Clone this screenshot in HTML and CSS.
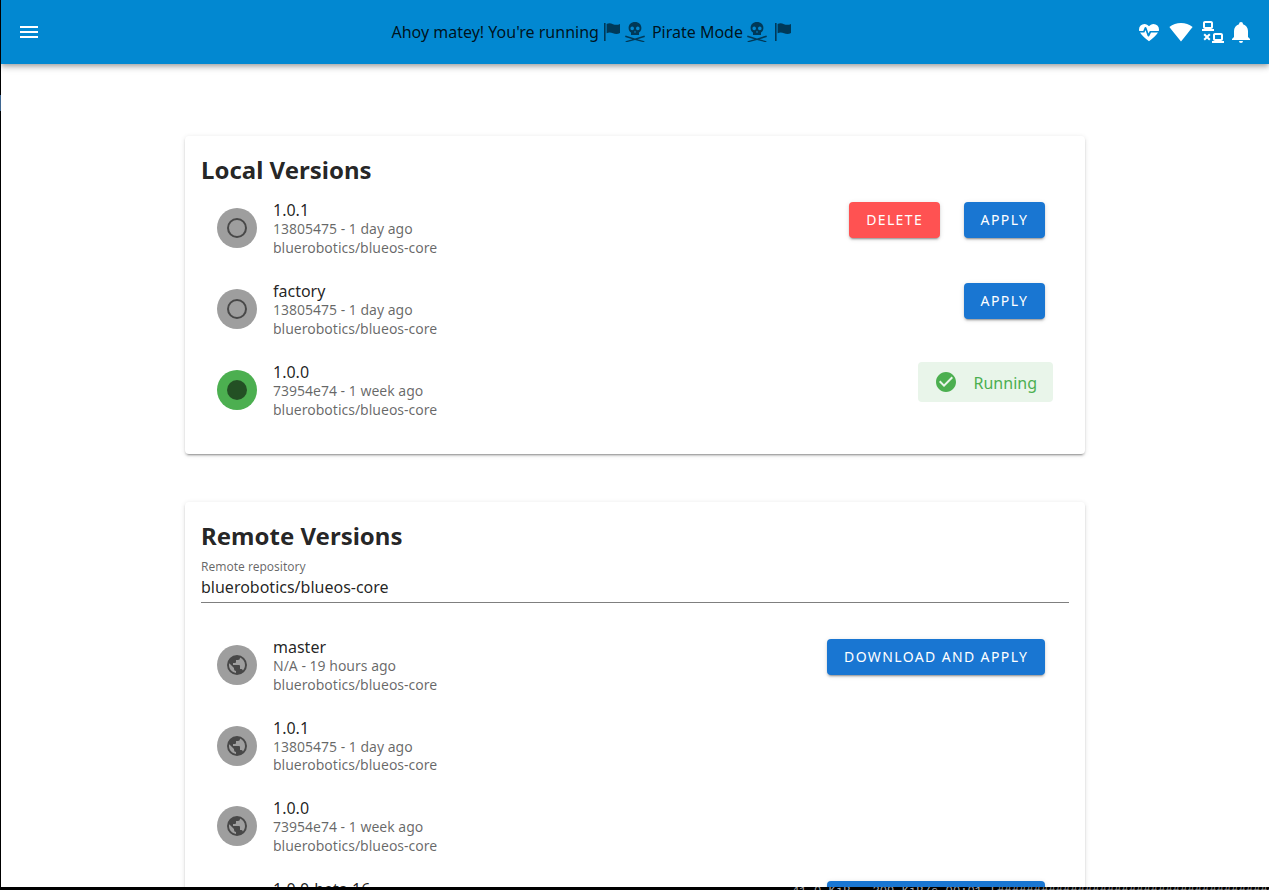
FILE: index.html
```html
<!DOCTYPE html>
<html lang="en">
<head>
  <meta charset="UTF-8" />
  <title>Version Chooser</title>
  <link rel="stylesheet" href="styles.css">
</head>
<body>

  <!-- icon set -->
  <svg class="icon-defs" xmlns="http://www.w3.org/2000/svg">
    <symbol id="i-menu" viewBox="0 0 24 24"><path d="M3,6H21V8H3V6M3,11H21V13H3V11M3,16H21V18H3V16Z"/></symbol>
    <symbol id="i-heart" viewBox="0 0 24 24"><path d="M7.5,4A5.5,5.5 0 0,0 2,9.5C2,10 2.09,10.5 2.22,11H6.27L7.53,7.63C7.83,6.82 9.08,6.74 9.47,7.63L11.5,13.5L12.5,11.5C12.7,11.1 13,11 13.4,11H21.78C21.91,10.5 22,10 22,9.5A5.5,5.5 0 0,0 16.5,4C14.64,4 13,4.93 12,6.34C11,4.93 9.36,4 7.5,4M3,12.5C4.5,15 8,18.5 12,21.35C16,18.5 19.5,15 21,12.5H14L12.3,15.9C11.9,16.7 10.8,16.6 10.5,15.8L8.5,10.1L7.4,12.5H3Z"/></symbol>
    <symbol id="i-wifi" viewBox="0 0 24 24"><path d="M12,3C7.79,3 3.7,4.41 0.38,7C4.41,12.06 7.89,16.37 12,21.5C16.08,16.42 20.24,11.24 23.65,7C20.32,4.41 16.22,3 12,3Z"/></symbol>
    <symbol id="i-lan" viewBox="0 0 24 24"><path d="M4,1C2.89,1 2,1.89 2,3V7C2,8.11 2.89,9 4,9H1V11H13V9H10C11.11,9 12,8.11 12,7V3C12,1.89 11.11,1 10,1H4M4,3H10V7H4V3M14,13C12.89,13 12,13.89 12,15V19C12,20.11 12.89,21 14,21H11V23H23V21H20C21.11,21 22,20.11 22,19V15C22,13.89 21.11,13 20,13H14M3.88,13.46L2.46,14.88L4.59,17L2.46,19.12L3.88,20.54L6,18.41L8.12,20.54L9.54,19.12L7.41,17L9.54,14.88L8.12,13.46L6,15.59L3.88,13.46M14,15H20V19H14V15Z"/></symbol>
    <symbol id="i-bell" viewBox="0 0 24 24"><path d="M21,19V20H3V19L5,17V11C5,7.9 7.03,5.17 10,4.29C10,4.19 10,4.1 10,4A2,2 0 0,1 12,2A2,2 0 0,1 14,4C14,4.1 14,4.19 14,4.29C16.97,5.17 19,7.9 19,11V17L21,19M14,21A2,2 0 0,1 12,23A2,2 0 0,1 10,21"/></symbol>
    <symbol id="i-radio" viewBox="0 0 24 24"><path d="M12,20A8,8 0 0,1 4,12A8,8 0 0,1 12,4A8,8 0 0,1 20,12A8,8 0 0,1 12,20M12,2A10,10 0 0,0 2,12A10,10 0 0,0 12,22A10,10 0 0,0 22,12A10,10 0 0,0 12,2Z"/></symbol>
    <symbol id="i-dot" viewBox="0 0 24 24"><circle cx="12" cy="12" r="10"/></symbol>
    <symbol id="i-earth" viewBox="0 0 24 24"><path d="M17.9,17.39C17.64,16.59 16.89,16 16,16H15V13A1,1 0 0,0 14,12H8V10H10A1,1 0 0,0 11,9V7H13A2,2 0 0,0 15,5V4.59C17.93,5.77 20,8.64 20,12C20,14.08 19.2,15.97 17.9,17.39M11,19.93C7.05,19.44 4,16.08 4,12C4,11.38 4.08,10.78 4.21,10.21L9,15V16A2,2 0 0,0 11,18M12,2A10,10 0 0,0 2,12A10,10 0 0,0 12,22A10,10 0 0,0 22,12A10,10 0 0,0 12,2Z"/></symbol>
    <symbol id="i-check" viewBox="0 0 24 24"><path d="M12 2C6.5 2 2 6.5 2 12S6.5 22 12 22 22 17.5 22 12 17.5 2 12 2M10 17L5 12L6.41 10.59L10 14.17L17.59 6.58L19 8L10 17Z"/></symbol>
    <symbol id="i-flag" viewBox="0 0 16 18"><path d="M0,0H1.6V18H0ZM2.6,1C5,-0.2 7,0.4 9,1.2C11,2 13.5,2.2 16,1V10C13.5,11.4 11,11 9,10.2C7,9.4 5,9 2.6,10.2Z"/></symbol>
    <symbol id="i-skull" viewBox="0 0 20 20"><path fill-rule="evenodd" d="M10,0C6,0 3.6,2.6 3.6,6C3.6,8 4.5,9.6 6,10.6V13H14V10.6C15.5,9.6 16.4,8 16.4,6C16.4,2.6 14,0 10,0ZM7.2,4.6A1.8,1.8 0 1,1 7.2,8.2A1.8,1.8 0 1,1 7.2,4.6ZM12.8,4.6A1.8,1.8 0 1,1 12.8,8.2A1.8,1.8 0 1,1 12.8,4.6ZM10,8.4L11,10.4H9Z"/><path d="M0.6,13.4L10,16.4L19.4,13.4L20,15L12.6,17.3L19.6,19.2L19,20.4L10,18L1,20.4L0.4,19.2L7.4,17.3L0,15Z"/></symbol>
  </svg>

  <div class="screen">
    <div class="edge"><span class="edge-mark"></span></div>

    <div class="app">
      <header class="bar">
        <svg class="ic menu-btn"><use href="#i-menu"/></svg>
        <div class="bar-title">
          Ahoy matey! You're running
          <svg class="pirate flag"><use href="#i-flag"/></svg>
          <svg class="pirate skull"><use href="#i-skull"/></svg>
          Pirate Mode
          <svg class="pirate skull skull-end"><use href="#i-skull"/></svg>
          <svg class="pirate flag flag-end"><use href="#i-flag"/></svg>
        </div>
        <div class="bar-tray">
          <svg class="ic"><use href="#i-heart"/></svg>
          <svg class="ic"><use href="#i-wifi"/></svg>
          <svg class="ic"><use href="#i-lan"/></svg>
          <svg class="ic bell"><use href="#i-bell"/></svg>
        </div>
      </header>

      <main class="content">
        <section class="card">
          <h2 class="card-title">Local Versions</h2>
          <ul class="versions">
            <li class="version">
              <span class="avatar"><svg class="ic"><use href="#i-radio"/></svg></span>
              <div class="info">
                <div class="name">1.0.1</div>
                <div class="sub">13805475 - 1 day ago</div>
                <div class="sub">bluerobotics/blueos-core</div>
              </div>
              <button class="btn btn-delete">Delete</button>
              <button class="btn">Apply</button>
            </li>
            <li class="version">
              <span class="avatar"><svg class="ic"><use href="#i-radio"/></svg></span>
              <div class="info">
                <div class="name">factory</div>
                <div class="sub">13805475 - 1 day ago</div>
                <div class="sub">bluerobotics/blueos-core</div>
              </div>
              <button class="btn">Apply</button>
            </li>
            <li class="version">
              <span class="avatar avatar-on"><svg class="ic"><use href="#i-dot"/></svg></span>
              <div class="info">
                <div class="name">1.0.0</div>
                <div class="sub">73954e74 - 1 week ago</div>
                <div class="sub">bluerobotics/blueos-core</div>
              </div>
              <div class="running">
                <svg class="ic"><use href="#i-check"/></svg>
                <span class="running-text">Running</span>
              </div>
            </li>
          </ul>
        </section>

        <section class="card">
          <h2 class="card-title">Remote Versions</h2>
          <div class="field">
            <label class="field-label">Remote repository</label>
            <div class="field-value">bluerobotics/blueos-core</div>
          </div>
          <ul class="versions versions-remote">
            <li class="version">
              <span class="avatar"><svg class="ic"><use href="#i-earth"/></svg></span>
              <div class="info">
                <div class="name">master</div>
                <div class="sub">N/A - 19 hours ago</div>
                <div class="sub">bluerobotics/blueos-core</div>
              </div>
              <button class="btn">Download and Apply</button>
            </li>
            <li class="version">
              <span class="avatar"><svg class="ic"><use href="#i-earth"/></svg></span>
              <div class="info">
                <div class="name">1.0.1</div>
                <div class="sub">13805475 - 1 day ago</div>
                <div class="sub">bluerobotics/blueos-core</div>
              </div>
            </li>
            <li class="version">
              <span class="avatar"><svg class="ic"><use href="#i-earth"/></svg></span>
              <div class="info">
                <div class="name">1.0.0</div>
                <div class="sub">73954e74 - 1 week ago</div>
                <div class="sub">bluerobotics/blueos-core</div>
              </div>
            </li>
            <li class="version">
              <span class="avatar"><svg class="ic"><use href="#i-earth"/></svg></span>
              <div class="info">
                <div class="name">1.0.0-beta.16</div>
                <div class="sub">73954e74 - 2 weeks ago</div>
                <div class="sub">bluerobotics/blueos-core</div>
              </div>
              <button class="btn">Download and Apply</button>
            </li>
          </ul>
        </section>
      </main>
    </div>

    <div class="terminal">41.0 KiB   309 KiB/s 00:01 [##############################################################]</div>
  </div>

</body>
</html>
```

FILE: styles.css
```css
html, body {
  margin: 0;
  height: 100%;
  overflow: hidden;
}

body {
  font-family: 'Noto Sans', sans-serif;
  background: #000;
  color: rgba(0,0,0,0.87);
}

.icon-defs {
  display: none;
}

.screen {
  height: 890px;
  display: grid;
  grid-template-columns: 1px 1fr;
  grid-template-rows: 1fr 3px;
}

.edge {
  background: #000;
  padding-top: 95px;
}

.edge-mark {
  display: block;
  height: 16px;
  background: #3f6690;
}

.app {
  background: #fff;
  overflow: hidden;
  min-height: 0;
}

.ic {
  display: block;
  width: 24px;
  height: 24px;
  fill: currentColor;
  flex: none;
}

/* app bar */
.bar {
  position: relative;
  z-index: 2;
  height: 64px;
  background: #0288d1;
  box-shadow: 0 2px 4px -1px rgba(0,0,0,0.2), 0 4px 5px 0 rgba(0,0,0,0.14), 0 1px 10px 0 rgba(0,0,0,0.12);
  display: flex;
  align-items: center;
  padding: 0 16px;
}

.menu-btn {
  color: #fff;
}

.bar-title {
  margin-left: 350.5px;
  display: flex;
  align-items: center;
  font-size: 16px;
  white-space: nowrap;
  color: rgba(0,0,0,0.87);
}

.pirate {
  fill: rgba(0,0,0,0.58);
  flex: none;
}

.flag {
  width: 16px;
  height: 18px;
  margin: 0 5px;
}

.skull {
  width: 20px;
  height: 20px;
  margin: 0 7px 0 0;
}

.skull-end {
  margin: 0 0 0 4.5px;
}

.flag-end {
  margin: 0 0 0 8px;
}

.bar-tray {
  margin-left: auto;
  display: flex;
  gap: 8px;
  color: #fff;
}

.bell {
  margin-left: -4px;
}

/* cards */
.content {
  padding-top: 72px;
}

.card {
  width: 900px;
  margin: 0 auto 48px;
  padding-bottom: 23px;
  background: #fff;
  border-radius: 4px;
  box-shadow: 0 3px 1px -2px rgba(0,0,0,0.2), 0 2px 2px 0 rgba(0,0,0,0.14), 0 1px 5px 0 rgba(0,0,0,0.12);
}

.card-title {
  margin: 0;
  padding: 16px 16px 0;
  font-size: 24px;
  line-height: 36px;
  font-weight: 700;
  height: 32px;
}

.versions {
  list-style: none;
  margin: 0;
  padding: 4px 32px 0;
}

.versions-remote .version {
  height: 80.5px;
}

.version {
  height: 81px;
  display: flex;
  align-items: flex-start;
}

.avatar {
  width: 40px;
  height: 40px;
  margin: 20px 16px 0 0;
  border-radius: 50%;
  background: #9e9e9e;
  color: rgba(0,0,0,0.54);
  display: flex;
  align-items: center;
  justify-content: center;
  flex: none;
}

.avatar-on {
  background: #4caf50;
}

.info {
  flex: 1;
  padding-top: 12px;
}

.name {
  font-size: 16px;
  line-height: 20px;
}

.sub {
  font-size: 14px;
  line-height: 18.5px;
  color: rgba(0,0,0,0.6);
}

/* buttons */
.btn {
  height: 36px;
  margin: 14px 8px 0 0;
  padding: 0 16.75px 2px;
  border: none;
  border-radius: 4px;
  background: #1976d2;
  color: #fff;
  font-family: inherit;
  font-size: 14px;
  font-weight: 400;
  letter-spacing: 1.38px;
  text-transform: uppercase;
  box-shadow: 0 3px 1px -2px rgba(0,0,0,0.2), 0 2px 2px 0 rgba(0,0,0,0.14), 0 1px 5px 0 rgba(0,0,0,0.12);
}

.btn-delete {
  background: #ff5252;
  margin-right: 24px;
}

.running {
  height: 40px;
  margin-top: 12px;
  padding: 0 16px;
  display: flex;
  align-items: center;
  gap: 16px;
  border-radius: 4px;
  background: #e9f5ea;
  color: #4caf50;
  font-size: 16px;
}

.running-text {
  padding-top: 2px;
}

/* remote repository field */
.field {
  margin: 0 16px;
  padding-top: 9px;
  height: 43px;
  border-bottom: 1px solid rgba(0,0,0,0.5);
  margin-bottom: 18px;
}

.field-label {
  display: block;
  font-size: 12px;
  line-height: 15px;
  color: rgba(0,0,0,0.6);
}

.field-value {
  font-size: 16px;
  line-height: 26px;
}

/* strip of the terminal behind the window */
.terminal {
  grid-column: 1 / -1;
  height: 3px;
  overflow: hidden;
  background: #000;
  color: #aaa;
  padding-left: 792px;
  font-family: 'Liberation Mono', monospace;
  font-size: 12.2px;
  line-height: 10px;
  white-space: pre;
}
```
